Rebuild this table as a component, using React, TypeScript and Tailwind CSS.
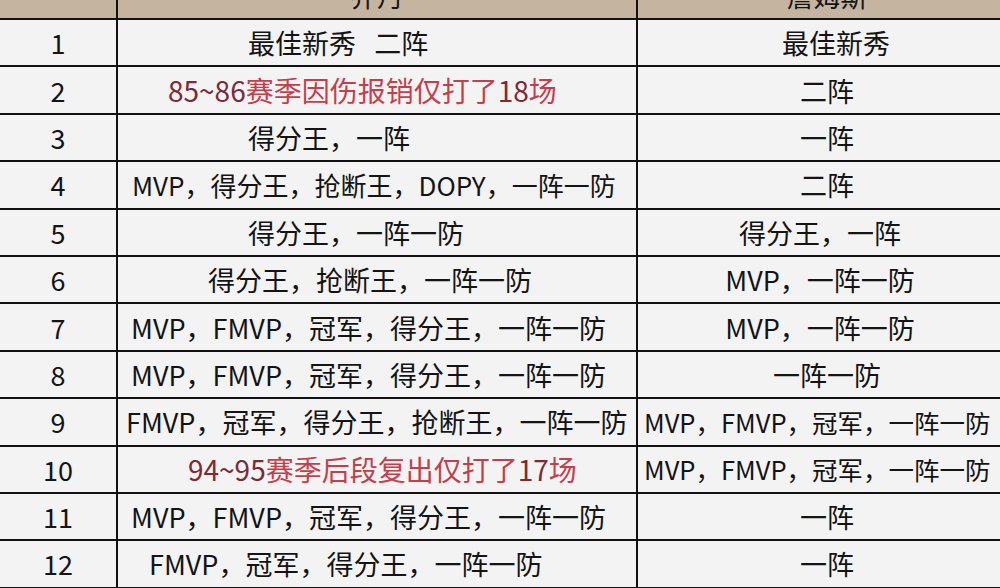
import React from "react";

type Row = {
  n: string;
  a: React.ReactNode;
  aCls: string;
  b: string;
  bCls: string;
};

const Red = ({ num, text, num2, text2 }: { num: string; text: string; num2: string; text2: string }) => (
  <span className="text-[28px]">
    <span className="text-[#7d2a36]">{num}</span>
    <span className="text-[#c2404c]">{text}</span>
    <span className="text-[#7d2a36]">{num2}</span>
    <span className="text-[#c2404c]">{text2}</span>
  </span>
);

const C = "justify-center pl-[16px]";

const rows: Row[] = [
  { n: "1", a: "最佳新秀   二阵", aCls: "pl-[130px]", b: "最佳新秀", bCls: "justify-center pl-[34px]" },
  { n: "2", a: <Red num="85~86" text="赛季因伤报销仅打了" num2="18" text2="场" />, aCls: "pl-[50px]", b: "二阵", bCls: C },
  { n: "3", a: "得分王，一阵", aCls: "pl-[130px]", b: "一阵", bCls: C },
  { n: "4", a: "MVP，得分王，抢断王，DOPY，一阵一防", aCls: "pl-[14px] text-[26px]", b: "二阵", bCls: C },
  { n: "5", a: "得分王，一阵一防", aCls: "pl-[130px]", b: "得分王，一阵", bCls: "justify-center pl-[2px]" },
  { n: "6", a: "得分王，抢断王，一阵一防", aCls: "pl-[90px]", b: "MVP，一阵一防", bCls: "justify-center pl-[2px]" },
  { n: "7", a: "MVP，FMVP，冠军，得分王，一阵一防", aCls: "pl-[13px]", b: "MVP，一阵一防", bCls: "justify-center pl-[2px]" },
  { n: "8", a: "MVP，FMVP，冠军，得分王，一阵一防", aCls: "pl-[13px]", b: "一阵一防", bCls: C },
  { n: "9", a: "FMVP，冠军，得分王，抢断王，一阵一防", aCls: "pl-[8px]", b: "MVP，FMVP，冠军，一阵一防", bCls: "pl-[6px] text-[25.5px]" },
  { n: "10", a: <Red num="94~95" text="赛季后段复出仅打了" num2="17" text2="场" />, aCls: "pl-[70px]", b: "MVP，FMVP，冠军，一阵一防", bCls: "pl-[6px] text-[25.5px]" },
  { n: "11", a: "MVP，FMVP，冠军，得分王，一阵一防", aCls: "pl-[13px]", b: "一阵", bCls: C },
  { n: "12", a: "FMVP，冠军，得分王，一阵一防", aCls: "pl-[31px]", b: "一阵", bCls: C },
];

export default function App() {
  return (
    <div
      className="w-[1000px] h-[588px] overflow-hidden bg-[#f3f3f3] text-[#141414] text-[27px] leading-none"
      style={{ fontFamily: '"Noto Sans CJK SC", "Noto Sans", sans-serif' }}
    >
      <div className="-mt-[27px]">
        <div className="flex h-[47px] bg-[#c5b4a0] border-b-[2px] border-[#111]">
          <div className="w-[118px] shrink-0 border-r-[2px] border-[#111]" />
          <div className="w-[520px] shrink-0 border-r-[2px] border-[#111] flex items-center justify-center">乔丹</div>
          <div className="flex-1 flex items-center justify-center pl-[16px]">詹姆斯</div>
        </div>
        {rows.map((r) => (
          <div key={r.n} className="flex h-[47.4px] border-b-[2px] border-[#111] bg-[#f3f3f3]">
            <div className="w-[118px] shrink-0 border-r-[2px] border-[#111] flex items-center justify-center">{r.n}</div>
            <div className={`w-[520px] shrink-0 border-r-[2px] border-[#111] flex items-center whitespace-pre ${r.aCls}`}>{r.a}</div>
            <div className={`flex-1 min-w-0 flex items-center whitespace-pre ${r.bCls}`}>{r.b}</div>
          </div>
        ))}
      </div>
    </div>
  );
}
